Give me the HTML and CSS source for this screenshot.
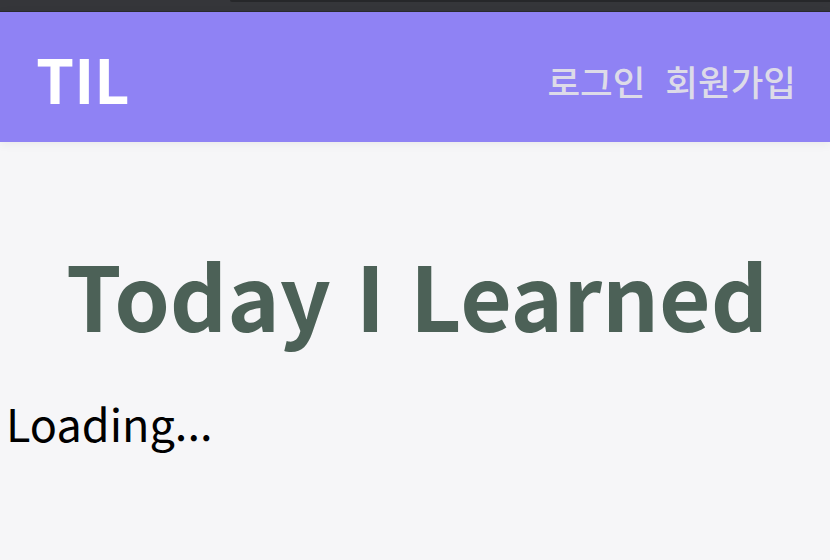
FILE: index.html
```html
<!DOCTYPE html>
<html lang="ko">
<head>
<meta charset="utf-8">
<title>TIL</title>
<link rel="stylesheet" href="styles.css">
</head>
<body>
<div class="chrome"><div class="chrome-tab"></div></div>
<header class="header">
  <a class="logo" href="#">TIL</a>
  <nav class="nav">
    <a class="nav-link" href="#">로그인</a>
    <a class="nav-link" href="#">회원가입</a>
  </nav>
</header>
<main class="main">
  <h1 class="title">Today I Learned</h1>
  <p class="loading">Loading...</p>
</main>
</body>
</html>
```
FILE: styles.css
```css
html, body {
  margin: 0;
  padding: 0;
}
body {
  background: #f6f6f8;
  font-family: "Noto Sans CJK KR", "Noto Sans", sans-serif;
  height: 560px;
  overflow: hidden;
}
.chrome {
  height: 12px;
  background: #35363a;
  border-bottom: 1px solid #2a2b2e;
  box-sizing: border-box;
  display: flex;
  justify-content: flex-end;
}
.chrome-tab {
  width: 600px;
  height: 2px;
  background: #26272a;
  border-radius: 0 0 0 8px;
}
.header {
  height: 130px;
  background: #8f82f4;
  display: flex;
  align-items: center;
  justify-content: space-between;
  padding: 0 34px 0 36px;
  box-shadow: 0 2px 10px rgba(0, 0, 0, 0.06);
  position: relative;
}
.logo {
  color: #ffffff;
  font-weight: 700;
  font-size: 61px;
  text-decoration: none;
  line-height: 1;
}
.nav {
  display: flex;
  gap: 20px;
  margin-top: 7px;
}
.nav-link {
  color: #dddbe8;
  font-size: 35.5px;
  font-weight: 500;
  text-decoration: none;
  line-height: 1;
}
.main {
  padding: 0 6px;
}
.title {
  margin: 107px 0 0;
  padding-left: 4px;
  text-align: center;
  color: #4c6157;
  font-size: 89px;
  font-weight: 700;
  line-height: 1;
}
.loading {
  margin: 62px 0 0;
  color: #000000;
  font-size: 45px;
  line-height: 1;
}
```
